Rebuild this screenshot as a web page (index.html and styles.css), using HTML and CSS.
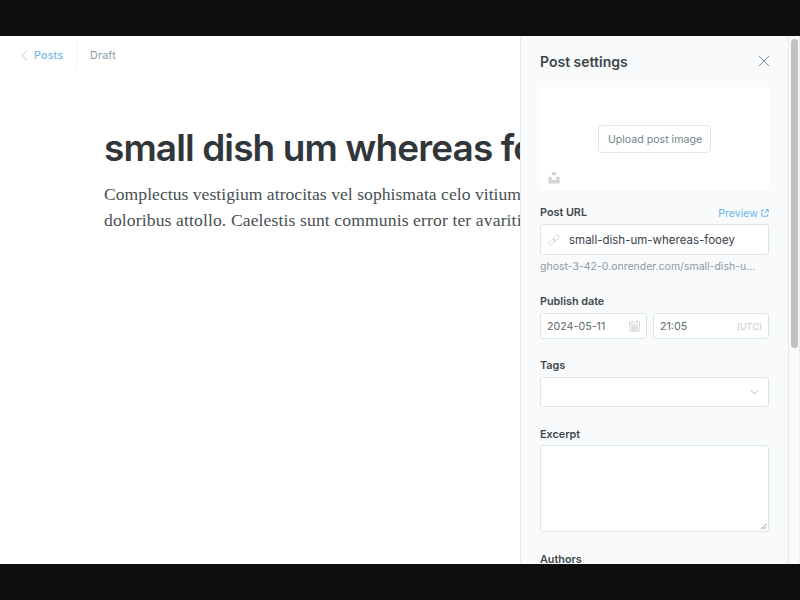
FILE: index.html
```html
<!DOCTYPE html>
<html lang="en">
<head>
<meta charset="utf-8">
<title>Post settings</title>
<link rel="stylesheet" href="styles.css">
</head>
<body>
<div class="app">
  <main class="editor">
    <header class="topbar">
      <a class="back"><svg width="7" height="11" viewBox="0 0 7 11"><path d="M6 .7 1 5.5l5 4.8"/></svg><span>Posts</span></a>
      <span class="status">Draft</span>
    </header>
    <article class="post">
      <h1>small dish um whereas fooey</h1>
      <p class="line-one">Complectus vestigium atrocitas vel sophismata celo vitium</p>
      <p class="line-two">doloribus attollo. Caelestis sunt communis error ter avaritia</p>
    </article>
  </main>
  <aside class="settings">
    <header class="settings-header">
      <h2>Post settings</h2>
      <svg class="close" width="12" height="12" viewBox="0 0 12 12"><path d="m1 1 10 10M11 1 1 11"/></svg>
    </header>
    <div class="uploader">
      <button class="upload"><span>Upload post image</span></button>
      <svg class="unsplash" width="12" height="12" viewBox="0 0 12 12"><path d="M3.8 0h4.4v3.2H3.8zM.4 5h3.4v3h4.4V5h3.4v6.4H.4z"/></svg>
    </div>
    <div class="label-row url-row">
      <label>Post URL</label>
      <a class="preview"><span>Preview</span><svg width="8" height="8" viewBox="0 0 8 8"><path d="M3 1.3H.8v5.9h5.9V5M4.5.7h2.8v2.8M7.1.9 3.7 4.3"/></svg></a>
    </div>
    <div class="field url">
      <svg width="12" height="12" viewBox="0 0 12 12"><g transform="rotate(-45 6 6)"><rect x="-.4" y="4.1" width="6.7" height="3.8" rx="1.9"/><rect x="5.7" y="4.1" width="6.7" height="3.8" rx="1.9"/><path d="M4 6h4"/></g></svg>
      <span>small-dish-um-whereas-fooey</span>
    </div>
    <p class="hint">ghost-3-42-0.onrender.com/small-dish-u...</p>
    <div class="label-row date-row"><label>Publish date</label></div>
    <div class="date-time">
      <div class="field date">
        <span>2024-05-11</span>
        <svg width="11" height="12" viewBox="0 0 11 12"><path d="M.5 2h10v9.3H.5zM.5 4.3h10M3 .4v2.4M8 .4v2.4M2 6.3h7M2 8h7M2 9.7h7M3.2 5.5v5M5.5 5.5v5M7.8 5.5v5"/></svg>
      </div>
      <div class="field time"><span>21:05</span><small>(UTC)</small></div>
    </div>
    <div class="label-row tags-row"><label>Tags</label></div>
    <div class="field tags"><svg width="9" height="6" viewBox="0 0 9 6"><path d="m.5.9 4 4 4-4"/></svg></div>
    <div class="label-row excerpt-row"><label>Excerpt</label></div>
    <div class="field excerpt"><svg width="7" height="7" viewBox="0 0 7 7"><path d="M.8 6.5 6.5.8M3.8 6.5l2.7-2.7"/></svg></div>
    <div class="label-row authors-row"><label>Authors</label></div>
  </aside>
  <div class="scrollbar"><div class="thumb"></div></div>
</div>
</body>
</html>
```

FILE: styles.css
```css
* { box-sizing: border-box; }
body {
  margin: 0;
  width: 800px;
  height: 600px;
  padding: 36px 0;
  overflow: hidden;
  background: #0e0e0e;
  font-family: Inter, "Liberation Sans", sans-serif;
  color: #394047;
}
h1, h2, p { margin: 0; white-space: nowrap; }
span, label, small { white-space: nowrap; }
svg { display: block; flex: none; fill: none; }
.app { display: flex; height: 528px; overflow: hidden; background: #fff; }

.editor { width: 520px; overflow: hidden; }
.topbar { display: flex; height: 38px; align-items: center; font-size: 10.7px; letter-spacing: .2px; }
.back { display: flex; align-items: center; width: 77px; height: 30px; padding-left: 21px; gap: 6px; border-right: 1px solid #edf3f6; color: #72b9eb; font-weight: 500; }
.back svg { stroke: #9bcdf1; stroke-width: .9; }
.status { padding-left: 13px; color: #8b999f; }
.post { padding: 50px 0 0 104px; }
h1 { height: 48px; line-height: 48px; font-size: 37px; font-weight: 600; letter-spacing: -.9px; color: #303639; }
.post p { height: 26px; line-height: 26px; font-family: "Liberation Serif", serif; font-size: 17.6px; letter-spacing: .03px; color: #484f52; }
.post .line-one { margin-top: 9px; }
.post .line-two { letter-spacing: .12px; }

.settings { width: 268px; padding: 0 19px; border-left: 1px solid #e5ecf1; background: #f9fafc; overflow: hidden; }
.settings-header { display: flex; justify-content: space-between; align-items: center; height: 50px; margin-bottom: 1px; }
h2 { padding-top: 2px; font-size: 14px; font-weight: 600; line-height: 20px; color: #3d4549; }
.close { stroke: #758087; stroke-width: .9; margin-right: -1px; }
.uploader { position: relative; display: flex; align-items: center; justify-content: center; height: 103px; border-radius: 3px; background: #fff; }
.upload { width: 113px; height: 28px; padding: 1px 0 0 1px; border: 1px solid #dfe7ea; border-radius: 4px; background: #fff; font: 10.6px Inter, sans-serif; color: #75838a; }
.unsplash { position: absolute; left: 8px; bottom: 6px; fill: #d3d4d5; }
.label-row { display: flex; align-items: center; justify-content: space-between; height: 16px; }
.label-row label { padding-top: 2px; font-size: 10.8px; font-weight: 600; line-height: 16px; color: #40484c; }
.url-row { margin-top: 14px; }
.preview { display: flex; align-items: center; gap: 3px; margin-top: 2px; font-size: 10.6px; color: #67b5ea; }
.preview svg { stroke: #67b5ea; stroke-width: 1; }
.field { display: flex; align-items: center; border: 1px solid #dae4eb; border-radius: 3px; background: #fff; }
.url { height: 31px; margin-top: 4px; padding-left: 7px; gap: 9px; font-size: 11.5px; }
.url svg { stroke: #ccd7dd; stroke-width: .8; }
.hint { height: 16px; margin-top: 4px; line-height: 16px; font-size: 10.5px; color: #8b9aa2; }
.date-row { margin-top: 18px; }
.date-time { display: flex; gap: 6px; margin-top: 4px; }
.date-time .field { height: 26px; justify-content: space-between; padding: 0 6px; font-size: 10.7px; color: #606b70; }
.date { width: 107px; }
.date svg { stroke: #c4ccd1; stroke-width: .7; }
.time { width: 116px; }
.time small { font-size: 9px; color: #c2cbd0; }
.tags-row { margin-top: 18px; }
.tags { height: 30px; margin-top: 4px; padding-right: 9px; justify-content: flex-end; }
.tags svg { stroke: #adb9c0; stroke-width: 1; }
.excerpt-row { margin-top: 19px; }
.excerpt { height: 87px; margin-top: 3px; align-items: flex-end; justify-content: flex-end; padding: 0 1px 1px 0; }
.excerpt svg { stroke: #777; stroke-width: .8; }
.authors-row { margin-top: 19px; }

.scrollbar { width: 12px; padding: 3px 2px 0; border-left: 1px solid #e6e7e8; border-right: 1px solid #ededee; background: #fafafa; }
.thumb { height: 309px; width: 7px; border-radius: 4px; background: #c1c1c1; }
```
